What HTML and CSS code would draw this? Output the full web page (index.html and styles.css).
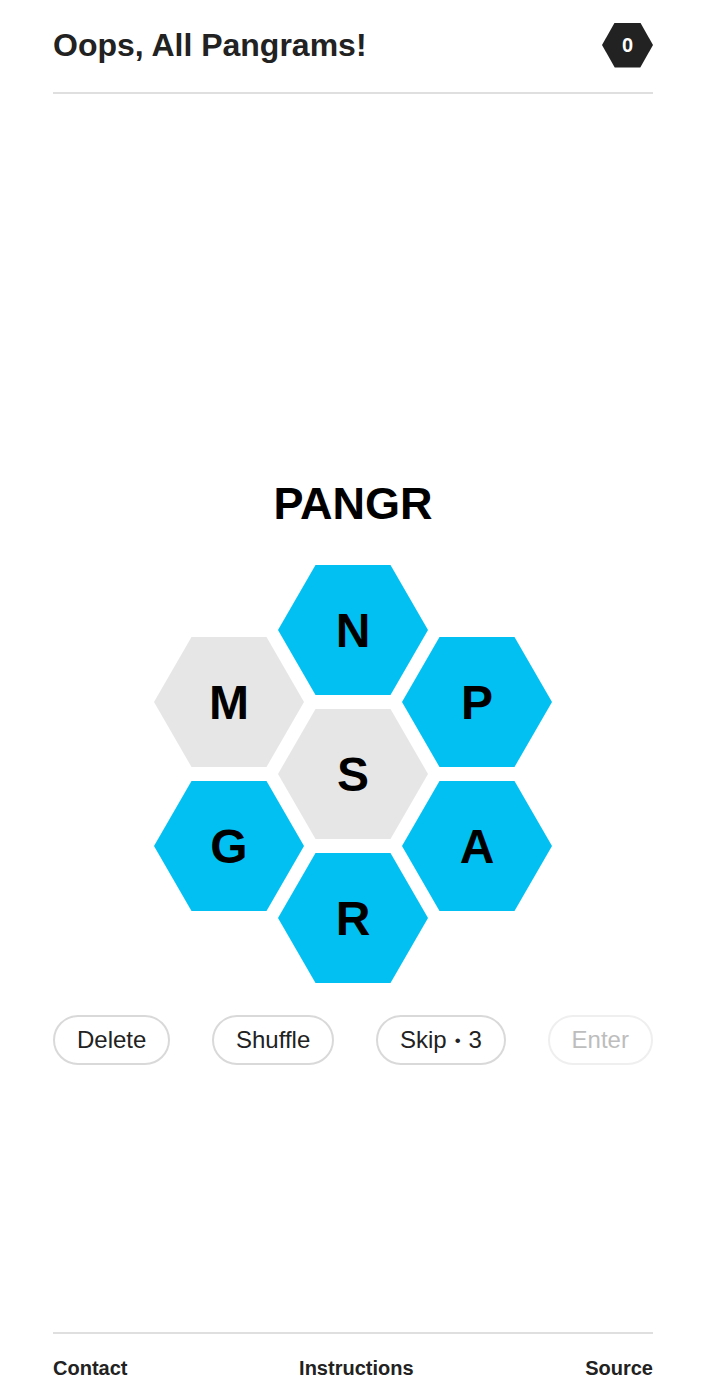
FILE: index.html
```html
<!DOCTYPE html>
<html lang="en">
<head>
<meta charset="utf-8">
<title>Oops, All Pangrams!</title>
<link rel="stylesheet" href="styles.css">
</head>
<body>
<div class="page">
  <header class="header">
    <h1 class="title">Oops, All Pangrams!</h1>
    <div class="badge">0</div>
  </header>
  <main class="main">
    <div class="word">PANGR</div>
    <div class="hive">
      <div class="col">
        <div class="hex grey">M</div>
        <div class="hex blue">G</div>
      </div>
      <div class="col">
        <div class="hex blue">N</div>
        <div class="hex grey">S</div>
        <div class="hex blue">R</div>
      </div>
      <div class="col">
        <div class="hex blue">P</div>
        <div class="hex blue">A</div>
      </div>
    </div>
    <div class="buttons">
      <button class="btn">Delete</button>
      <button class="btn">Shuffle</button>
      <button class="btn">Skip<span class="dot">•</span>3</button>
      <button class="btn disabled">Enter</button>
    </div>
  </main>
  <footer class="footer">
    <a class="flink">Contact</a>
    <a class="flink">Instructions</a>
    <a class="flink">Source</a>
  </footer>
</div>
</body>
</html>
```

FILE: styles.css
```css
* { box-sizing: border-box; }
html, body { margin: 0; padding: 0; background: #fff; }
body {
  font-family: "Liberation Sans", Arial, Helvetica, sans-serif;
  color: #222;
}
.page {
  width: 600px;
  margin: 0 auto;
  min-height: 1400px;
  display: flex;
  flex-direction: column;
}
.header {
  height: 94px;
  border-bottom: 2px solid #dfdfdf;
  display: flex;
  align-items: center;
  justify-content: space-between;
  padding-bottom: 2px;
}
.title {
  margin: 0;
  font-size: 32px;
  font-weight: bold;
  line-height: 36px;
  color: #222;
}
.badge {
  width: 51px;
  height: 45px;
  background: #222;
  color: #fff;
  clip-path: polygon(25% 0, 75% 0, 100% 50%, 75% 100%, 25% 100%, 0 50%);
  display: flex;
  align-items: center;
  justify-content: center;
  font-weight: bold;
  font-size: 20px;
}
.main {
  flex: 1;
  display: flex;
  flex-direction: column;
  align-items: center;
  padding-top: 385px;
}
.word {
  font-size: 45px;
  line-height: 50px;
  font-weight: bold;
  color: #000;
  height: 50px;
}
.hive {
  margin-top: 36px;
  display: flex;
  align-items: center;
}
.col {
  display: flex;
  flex-direction: column;
  gap: 14px;
}
.col + .col { margin-left: -26px; }
.hex {
  width: 150px;
  height: 130px;
  clip-path: polygon(25% 0, 75% 0, 100% 50%, 75% 100%, 25% 100%, 0 50%);
  display: flex;
  align-items: center;
  justify-content: center;
  font-size: 48px;
  font-weight: bold;
  color: #000;
}
.blue { background: #03c0f3; }
.grey { background: #e6e6e6; }
.buttons {
  margin-top: 32px;
  width: 100%;
  display: flex;
  justify-content: space-between;
}
.btn {
  height: 50px;
  padding: 0 22px;
  border: 2px solid #d9d9d9;
  border-radius: 25px;
  background: #fff;
  font-family: "Liberation Sans", Arial, Helvetica, sans-serif;
  font-size: 24px;
  color: #222;
}
.dot {
  font-size: 17px;
  margin: 0 8px;
  vertical-align: 2px;
}
.btn.disabled {
  border-color: #efefef;
  color: #bdbdbd;
}
.footer {
  border-top: 2px solid #dfdfdf;
  padding: 22px 0 20px;
  display: flex;
  justify-content: space-between;
  line-height: 24px;
}
.flink {
  font-size: 20px;
  font-weight: bold;
  color: #222;
}
```
